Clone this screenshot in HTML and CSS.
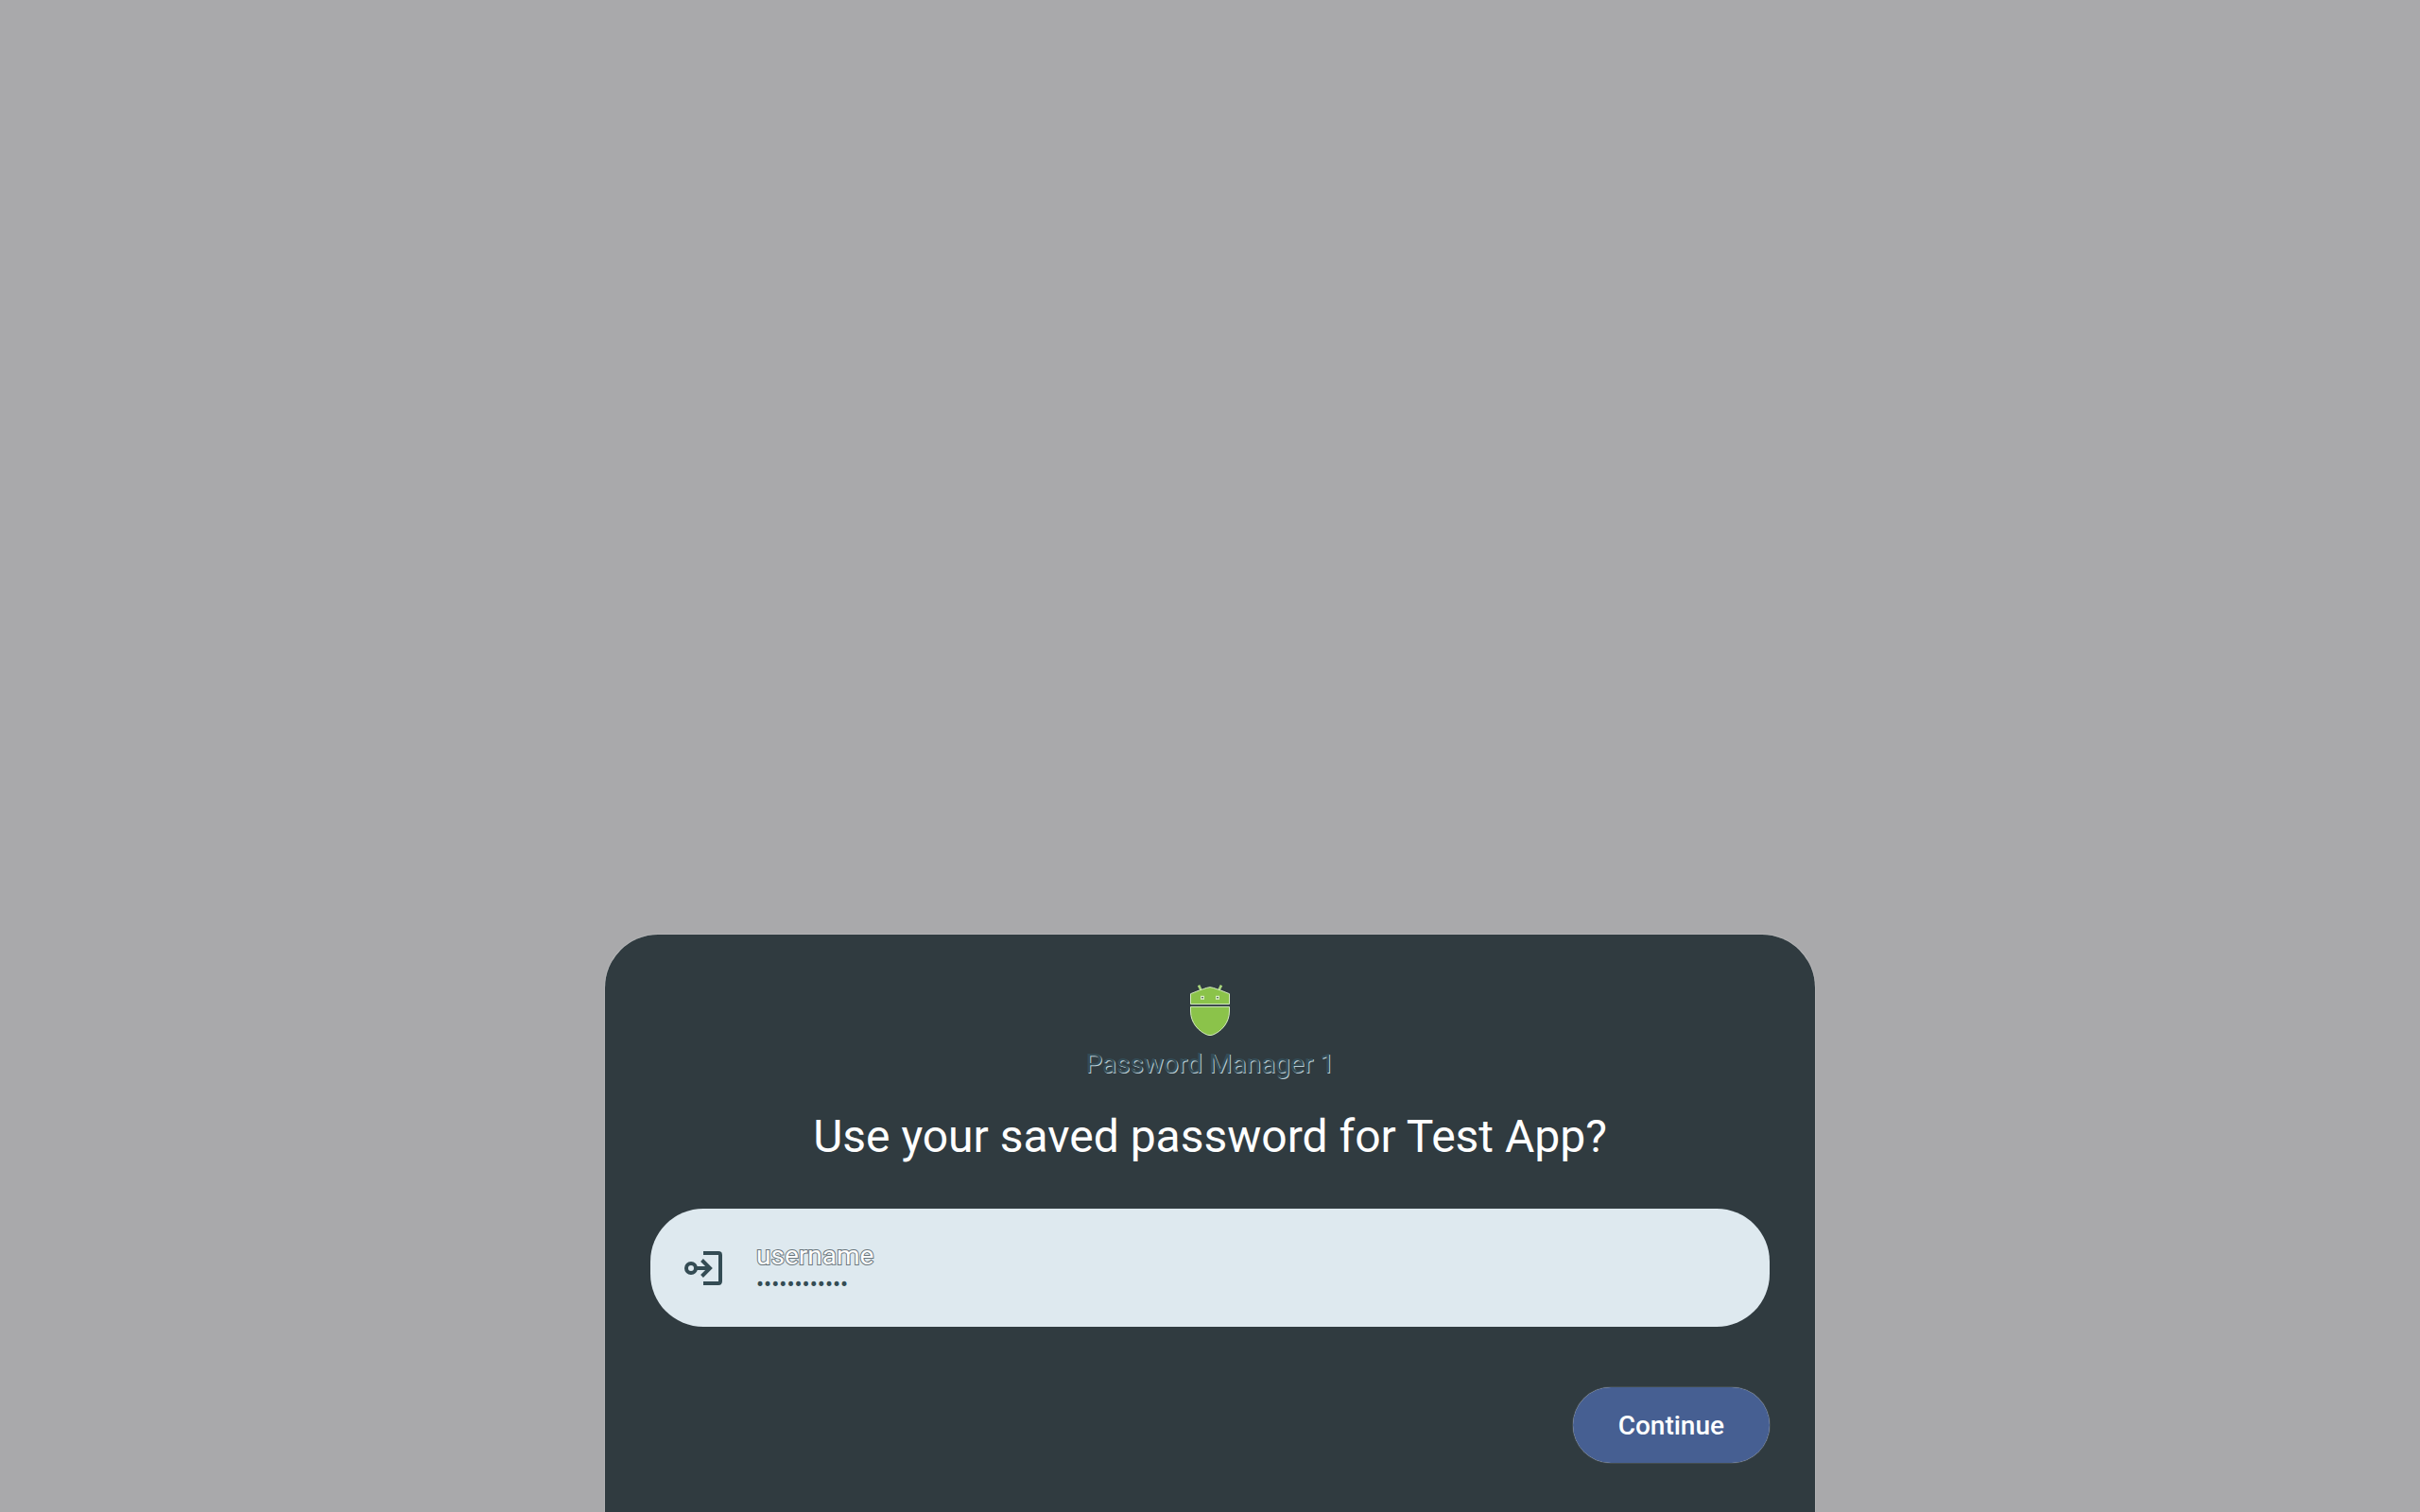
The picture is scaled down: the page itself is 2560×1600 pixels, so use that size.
FILE: index.html
```html
<!DOCTYPE html>
<html lang="en">
<head>
<meta charset="utf-8">
<title>Use saved password</title>
<link rel="stylesheet" href="styles.css">
</head>
<body>
<main class="sheet">
  <header class="header">
    <svg class="logo" viewBox="57 36 126 162" aria-hidden="true">
      <path class="logo-antenna" d="M84 38L92 54M156 38L148 54"/>
      <path class="logo-shape" d="M58.500 97.500V65L86 54L98 50L110 46Q120 42 130 46L142 50L154 54L181.500 65V97.500Z"/>
      <path class="logo-shape" d="M58.500 106H181.500V120C181.500 157 156 185 128 195.500Q120 198 112 195.500C84 185 58.500 157 58.500 120Z"/>
      <path class="logo-eye" d="M92 73h8v8h-8zM140 73h8v8h-8z"/>
    </svg>
    <p class="provider">Password Manager 1</p>
  </header>
  <h1 class="title">Use your saved password for Test App?</h1>
  <button class="entry" type="button">
    <svg class="entry-icon" viewBox="0 0 48 48" aria-hidden="true">
      <circle cx="11" cy="24" r="5"/>
      <path d="M16 24H30M22.500 15.500L31 24L22.500 32.500M24 8H40Q42 8 42 10V38Q42 40 40 40H24"/>
    </svg>
    <span class="entry-text">
      <span class="username">username</span>
      <span class="password">••••••••••••</span>
    </span>
  </button>
  <div class="actions">
    <button class="continue" type="button">Continue</button>
  </div>
</main>
</body>
</html>
```
FILE: styles.css
```css
* {
  box-sizing: border-box;
}

body {
  margin: 0;
  min-height: 100vh;
  display: flex;
  align-items: flex-end;
  justify-content: center;
  background: #a9a9ab;
  font-family: Roboto, "Liberation Sans", sans-serif;
}

.sheet {
  width: 50%;
  padding: 53px 48px 52px;
  border-radius: 56px 56px 0 0;
  background: #303b40;
  box-shadow: 0 0 1px #ffffff;
}

.header {
  display: flex;
  flex-direction: column;
  align-items: center;
  gap: 10px;
}

.logo {
  width: 42px;
  height: 54px;
  overflow: visible;
}

.logo-shape {
  fill: #8bc34a;
  stroke: #d5ecc0;
  stroke-width: 3;
}

.logo-antenna {
  fill: none;
  stroke: #a9d67c;
  stroke-width: 8;
}

.logo-eye {
  fill: #303b40;
  stroke: #d5ecc0;
  stroke-width: 4;
}

.provider {
  margin: 0;
  font-size: 28px;
  line-height: 40px;
  color: #344c56;
  text-shadow: 1px 1px 0 #b9cdd5;
}

.title {
  margin: 25px 0 0;
  font-size: 48px;
  font-weight: 400;
  line-height: 64px;
  text-align: center;
  color: #ffffff;
}

.entry {
  width: 100%;
  margin-top: 44px;
  padding: 32px;
  display: flex;
  align-items: center;
  gap: 32px;
  border: 0;
  border-radius: 56px;
  background: #dee9ef;
  font-family: inherit;
  text-align: left;
}

.entry-icon {
  width: 48px;
  height: 48px;
  fill: none;
  stroke: #344c54;
  stroke-width: 4;
}

.entry-text {
  display: flex;
  flex-direction: column;
}

.username {
  font-size: 28px;
  line-height: 35px;
  color: #ffffff;
  -webkit-text-stroke: 2px #69757b;
  paint-order: stroke fill;
}

.password {
  font-size: 24px;
  line-height: 26px;
  color: #344c54;
}

.actions {
  display: flex;
  justify-content: flex-end;
  margin-top: 64px;
}

.continue {
  height: 80px;
  padding: 0 48px;
  border: 0;
  border-radius: 40px;
  background: #465f92;
  box-shadow: 0 0 1px #ffffff;
  color: #ffffff;
  font-family: inherit;
  font-size: 28px;
  font-weight: 500;
}
```
